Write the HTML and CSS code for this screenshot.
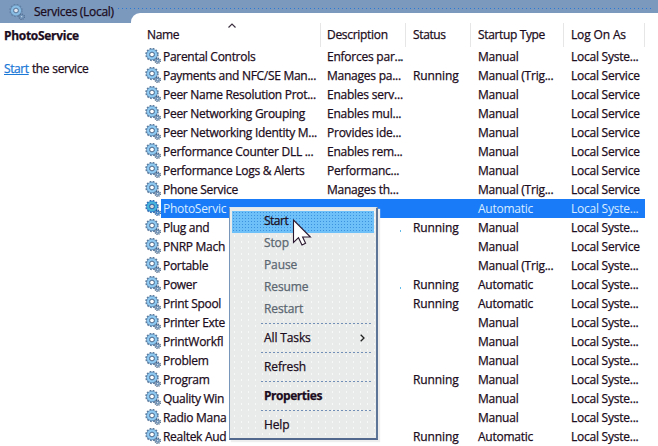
FILE: index.html
```
<!DOCTYPE html>
<html lang="en">
<head>
<meta charset="utf-8">
<title>Services</title>
<link rel="stylesheet" href="styles.css">
</head>
<body>
<svg class="defs" aria-hidden="true">
  <symbol id="gear" viewBox="0 0 16 16">
    <circle cx="7" cy="6.5" r="5.7" fill="none" stroke="#5a7a9c" stroke-width="2" stroke-dasharray="1.7 1.28"/>
    <circle cx="7" cy="6.5" r="3.9" fill="#f4faff" stroke="#5f88b0" stroke-width="3.6"/>
    <circle cx="7" cy="6.5" r="3.9" fill="none" stroke="#8fcaf2" stroke-width="2.3"/>
    <circle cx="7" cy="6.5" r="2.3" fill="#fff" stroke="#48688c" stroke-width=".9"/>
    <circle cx="12.7" cy="12.7" r="2.5" fill="none" stroke="#435f80" stroke-width="1.6" stroke-dasharray="1.1 .86"/>
    <circle cx="12.7" cy="12.7" r="1.4" fill="#eef6fc" stroke="#6d91b6" stroke-width="1.5"/>
  </symbol>
</svg>
<div class="window">
  <header class="bar"><svg class="gear"><use href="#gear"/></svg><span>Services (Local)</span></header>
  <div class="content">
    <aside class="side"><h1>PhotoService</h1><p><a>Start</a> the service</p></aside>
    <main class="list">
      <div class="head"><span>Name</span><span>Description</span><span>Status</span><span>Startup Type</span><span>Log On As</span>
        <svg class="sort" viewBox="0 0 8 5"><path d="M.5 4.5 4 1l3.5 3.5" fill="none" stroke="#3c3040" stroke-width="1.2"/></svg></div>
      <div id="rows"></div>
    </main>
  </div>
  <div class="menu">
    <div class="item hot">Start</div>
    <div class="item off">Stop</div>
    <div class="item off">Pause</div>
    <div class="item off">Resume</div>
    <div class="item off">Restart</div>
    <div class="sep"></div>
    <div class="item">All Tasks<svg class="more" viewBox="0 0 5 8"><path d="M.7.7 4 4 .7 7.3" fill="none" stroke="#222" stroke-width="1.3"/></svg></div>
    <div class="sep"></div>
    <div class="item">Refresh</div>
    <div class="sep"></div>
    <div class="item strong">Properties</div>
    <div class="sep"></div>
    <div class="item">Help</div>
  </div>
  <svg class="cursor" viewBox="0 0 20 28"><path d="M1.5 1v22.5l5-4.8 3.5 7.3 3.6-1.8-3-6.2h7.8z" fill="#fff" stroke="#2b1830" stroke-width="1.1"/></svg>
</div>
<script src="rows.js"></script>
</body>
</html>
```
FILE: rows.js
```
const S = 'Local Syste...', L = 'Local Service', T = 'Manual (Trig...', M = 'Manual', A = 'Automatic', R = 'Running';
const services = [
  ['Parental Controls', 'Enforces par...', '', M, S],
  ['Payments and NFC/SE Man...', 'Manages pa...', R, T, L],
  ['Peer Name Resolution Prot...', 'Enables serv...', '', M, L],
  ['Peer Networking Grouping', 'Enables mul...', '', M, L],
  ['Peer Networking Identity M...', 'Provides ide...', '', M, L],
  ['Performance Counter DLL ...', 'Enables rem...', '', M, L],
  ['Performance Logs & Alerts', 'Performanc...', '', M, L],
  ['Phone Service', 'Manages th...', '', T, L],
  ['PhotoServic', '', '', A, S],
  ['Plug and', '', R, M, S],
  ['PNRP Mach', '', '', M, L],
  ['Portable', '', '', T, S],
  ['Power', '', R, A, S],
  ['Print Spool', '', R, A, S],
  ['Printer Exte', '', '', M, S],
  ['PrintWorkfl', '', '', M, S],
  ['Problem', '', '', M, S],
  ['Program', '', R, M, S],
  ['Quality Win', '', '', M, S],
  ['Radio Mana', '', '', M, S],
  ['Realtek Aud', '', R, A, S]
];
const rows = document.getElementById('rows');
services.forEach((service, i) => {
  const row = document.createElement('div');
  row.className = 'row' + (i === 8 ? ' selected' : '') + ([0, 9, 12].includes(i) ? ' tick' : '');
  row.innerHTML = '<svg class="gear"><use href="#gear"/></svg>';
  service.forEach(text => {
    const cell = document.createElement('span');
    cell.textContent = text;
    row.append(cell);
  });
  rows.append(row);
});
```
FILE: styles.css
```
* { box-sizing: border-box; }
body { margin: 0; background: #fff; color: #1c0c20; font: 12px/19px "Open Sans", "Noto Sans", sans-serif; letter-spacing: -0.22px; -webkit-text-stroke: 0.25px; }
.defs { position: absolute; width: 0; height: 0; }
.window { position: relative; width: 658px; height: 446px; overflow: hidden; }
.bar { height: 23px; padding-left: 9px; display: flex; align-items: center; background: #7b98bd; }
.bar .gear { opacity: 0.75; }
.bar span { margin: -1px 0 0 9px; letter-spacing: -0.3px; }
.bar::after { content: ""; flex: 1; height: 1px; margin: -6px 4px 0 4px; background: repeating-linear-gradient(90deg, #2878d8 0 1px, transparent 1px 4px); }
.gear { width: 16px; height: 16px; flex: none; }
.content { display: flex; margin-top: -10px; height: 433px; }
.side { width: 131px; padding: 13px 0 0 4px; }
.side h1 { margin: 0 0 14px; font-size: 12px; line-height: 19px; letter-spacing: -0.3px; }
.side p { margin: 0; letter-spacing: -0.4px; word-spacing: 0.5px; }
.side a { color: #1b78d7; text-decoration: underline; }
.list { flex: 1; padding-top: 10px; background: #fff; border-top-left-radius: 9px; }
.head, .row { display: grid; white-space: nowrap; }
.head { position: relative; height: 24px; padding-left: 15px; grid-template-columns: 180px 86px 65px 93px 80px; letter-spacing: -0.36px; }
.head span { padding-left: 1px; line-height: 24px; background: linear-gradient(#e6e6e6, #e6e6e6) right 6px top / 1px 100% no-repeat; }
.head span:nth-child(2) { letter-spacing: -0.3px; }
.head span:first-child { background-position: right 5px top; }
.head span:nth-child(5) { background-position: right 5px top; letter-spacing: -0.15px; }
.sort { position: absolute; left: 97px; top: 0; width: 8px; height: 5px; }
.row { height: 19px; padding-left: 14px; width: 514px; grid-template-columns: 16px 166px 86px 65px 93px 1fr; }
.row .gear { margin-top: 1px; }
.row span { padding-left: 2px; letter-spacing: -0.29px; }
.row span:nth-of-type(n+2) { padding-left: 0; letter-spacing: -0.24px; }
.row span:nth-of-type(3) { letter-spacing: -0.12px; }
.selected { color: #d8ecff; background: linear-gradient(#1a7bf8, #1a7bf8) 30px 0 no-repeat; -webkit-text-stroke: 0; }
.selected .gear { filter: saturate(2.2) brightness(.85); }
.tick span:nth-of-type(2) { background: linear-gradient(#62bce9, #62bce9) 73px 12px / 1px 2px no-repeat; }
.menu { position: absolute; left: 229px; top: 207px; width: 149px; height: 233px; padding: 3px 0 0 2px; border: 1px solid #7896b9; border-top-color: #dfe8ef; border-right: 2px solid #5d7597; border-bottom: 2px solid #52698d; background: radial-gradient(circle, #f7f9f9 0.6px, transparent 0.8px) 1px 1px / 7px 6px, #e8ebea; box-shadow: 2px 2px 1px #eee; letter-spacing: -0.12px; }
.item { width: 142px; height: 22px; padding: 0 0 2px 32px; line-height: 18px; display: flex; align-items: center; }
.item:not(.hot) { margin-top: -1px; height: 23px; padding-bottom: 2px; }
.off { color: #5b6670; }
.hot { background: radial-gradient(circle, #3d92df 0.6px, transparent 0.8px) 0 0 / 3px 3px, #6dc1f8; letter-spacing: -0.5px; }
.strong { font-weight: 700; letter-spacing: -0.45px; }
.more { width: 5px; height: 8px; margin-left: auto; margin-right: 9px; }
.sep { height: 7px; margin: 0 4px 0 29px; background: repeating-linear-gradient(90deg, #7290b7 0 2px, transparent 2px 4px) 0 2px / 100% 1px no-repeat; }
.cursor { position: absolute; left: 292px; top: 219px; width: 20px; height: 28px; }
```
